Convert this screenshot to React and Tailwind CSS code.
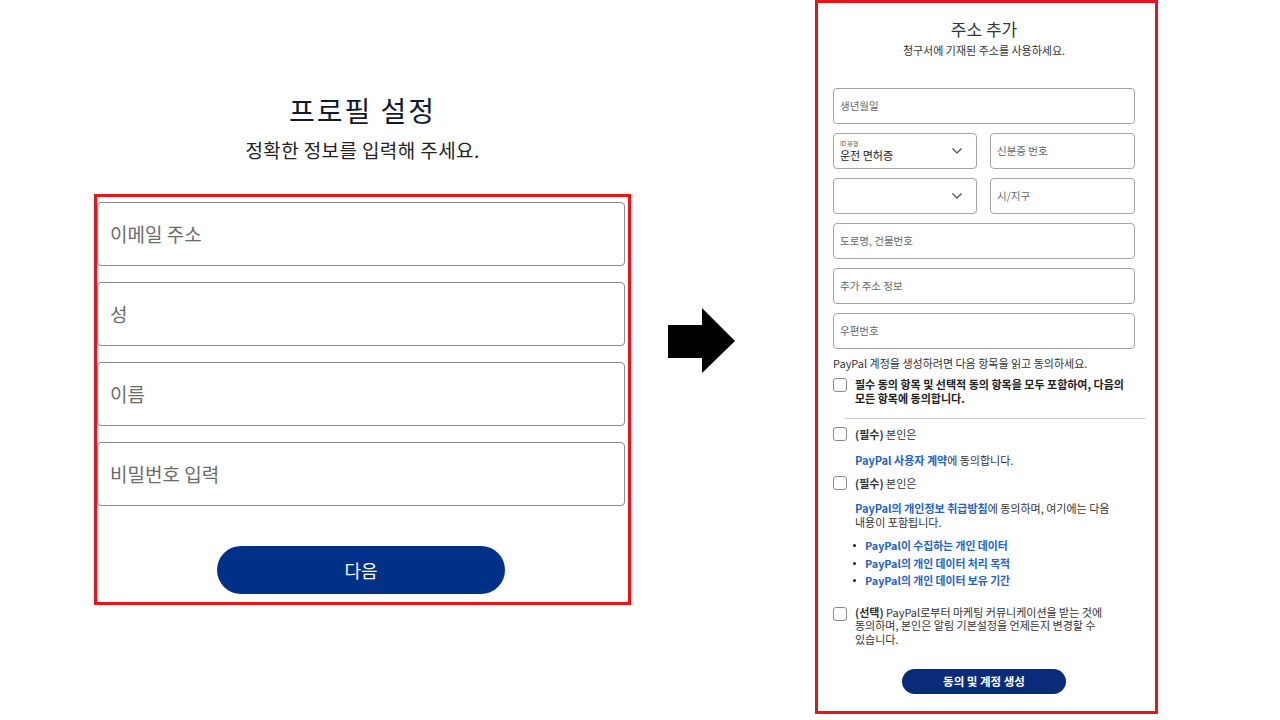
import React from "react";

const FONT = { fontFamily: '"Noto Sans CJK KR", "Noto Sans", sans-serif' };

function BigInput({ text }) {
  return (
    <div className="h-[64px] w-full rounded-[4px] border border-[#8c8c8c] flex items-center pl-[12px] text-[19px] text-[#6b6b6b]">
      {text}
    </div>
  );
}

function SmallInput({ text, className = "" }) {
  return (
    <div
      className={
        "h-[36px] rounded-[4px] border border-[#a3a3a3] flex items-center pl-[6px] text-[10.5px] text-[#666] " +
        className
      }
    >
      {text}
    </div>
  );
}

function Chevron() {
  return (
    <svg width="12" height="8" viewBox="0 0 12 8" className="mr-[13px]">
      <path d="M1.5 1.5 L6 6 L10.5 1.5" fill="none" stroke="#444" strokeWidth="1.2" />
    </svg>
  );
}

function Box() {
  return (
    <div className="w-[14px] h-[14px] shrink-0 rounded-[3px] border border-[#8a8a8a] bg-white" />
  );
}

function Link({ children }) {
  return <span className="font-bold text-[#1f63c6]">{children}</span>;
}

export default function App() {
  return (
    <div className="w-[1280px] h-[720px] bg-white flex items-start overflow-hidden" style={FONT}>
      {/* left: profile form */}
      <div className="ml-[94px] w-[537px] flex flex-col items-center">
        <div className="mt-[92px] text-[28px] leading-[36px] text-[#101a2c] tracking-[2px]">
          프로필 설정
        </div>
        <div className="mt-[10px] text-[19px] leading-[24px] text-[#222] tracking-[0.4px]">
          정확한 정보를 입력해 주세요.
        </div>
        <div className="mt-[32px] w-[537px] border-[3px] border-[#e8141c] pt-[5px] pr-[3px] pb-[8px] flex flex-col">
          <div className="flex flex-col gap-[16px]">
            <BigInput text="이메일 주소" />
            <BigInput text="성" />
            <BigInput text="이름" />
            <BigInput text="비밀번호 입력" />
          </div>
          <button className="mt-[40px] self-center w-[288px] h-[48px] rounded-full bg-[#003087] text-white text-[18px]">
            다음
          </button>
        </div>
      </div>

      {/* arrow */}
      <svg width="67" height="66" viewBox="0 0 67 66" className="ml-[37px] mt-[308px] shrink-0">
        <rect x="0" y="17" width="35" height="33" fill="#000" />
        <polygon points="34,0 67,33 34,65" fill="#000" />
      </svg>

      {/* right: address form */}
      <div className="ml-[80px] w-[343px] h-[714px] border-[3px] border-[#e8141c] flex flex-col pl-[15px]">
        <div className="w-[302px] flex flex-col items-center">
          <div className="mt-[16px] text-[17px] leading-[20px] text-[#2b3a40]">주소 추가</div>
          <div className="mt-[4px] text-[11px] leading-[14px] text-[#333]">
            청구서에 기재된 주소를 사용하세요.
          </div>
        </div>

        <div className="mt-[31px] w-[302px] flex flex-col gap-[9px]">
          <SmallInput text="생년월일" />
          <div className="flex gap-[13px]">
            <div className="h-[36px] w-[144px] rounded-[4px] border border-[#a3a3a3] flex items-center justify-between pl-[6px]">
              <div className="flex flex-col">
                <span className="text-[6px] leading-[8px] text-[#555]">ID 유형</span>
                <span className="text-[11px] leading-[15px] text-[#222]">운전 면허증</span>
              </div>
              <Chevron />
            </div>
            <SmallInput text="신분증 번호" className="w-[145px]" />
          </div>
          <div className="flex gap-[13px]">
            <div className="h-[36px] w-[144px] rounded-[4px] border border-[#a3a3a3] flex items-center justify-end">
              <Chevron />
            </div>
            <SmallInput text="시/지구" className="w-[145px]" />
          </div>
          <SmallInput text="도로명, 건물번호" />
          <SmallInput text="추가 주소 정보" />
          <SmallInput text="우편번호" />
        </div>

        <div className="mt-[7px] text-[11px] leading-[14px] text-[#333] whitespace-nowrap">
          PayPal 계정을 생성하려면 다음 항목을 읽고 동의하세요.
        </div>

        <div className="mt-[7px] flex gap-[8px]">
          <div className="mt-[1px]">
            <Box />
          </div>
          <div className="text-[11px] leading-[14px] font-bold text-[#222] whitespace-nowrap">
            필수 동의 항목 및 선택적 동의 항목을 모두 포함하여, 다음의
            <br />
            모든 항목에 동의합니다.
          </div>
        </div>

        <div className="mt-[13px] ml-[12px] w-[300px] h-px bg-[#c8c8c8]" />

        <div className="mt-[8px] flex gap-[8px] items-center">
          <Box />
          <div className="text-[11px] leading-[14px] text-[#333]">
            <span className="font-bold">(필수)</span> 본인은
          </div>
        </div>
        <div className="mt-[12px] ml-[22px] text-[11px] leading-[14px] text-[#333] whitespace-nowrap">
          <Link>PayPal 사용자 계약</Link>에 동의합니다.
        </div>

        <div className="mt-[9px] flex gap-[8px] items-center">
          <Box />
          <div className="text-[11px] leading-[14px] text-[#333]">
            <span className="font-bold">(필수)</span> 본인은
          </div>
        </div>
        <div className="mt-[11px] ml-[22px] text-[11px] leading-[14px] text-[#333] whitespace-nowrap">
          <Link>PayPal의 개인정보 취급방침</Link>에 동의하며, 여기에는 다음
          <br />
          내용이 포함됩니다.
        </div>

        <ul className="mt-[8px] ml-[20px] flex flex-col text-[10.8px] leading-[17.5px] whitespace-nowrap">
          {["PayPal이 수집하는 개인 데이터", "PayPal의 개인 데이터 처리 목적", "PayPal의 개인 데이터 보유 기간"].map(
            (t) => (
              <li key={t} className="flex items-center gap-[9px]">
                <span className="w-[3px] h-[3px] rounded-full bg-[#222]" />
                <Link>{t}</Link>
              </li>
            )
          )}
        </ul>

        <div className="mt-[16px] flex gap-[8px]">
          <div className="mt-[1px]">
            <Box />
          </div>
          <div className="text-[11px] leading-[13.5px] text-[#333] whitespace-nowrap">
            <span className="font-bold">(선택)</span> PayPal로부터 마케팅 커뮤니케이션을 받는 것에
            <br />
            동의하며, 본인은 알림 기본설정을 언제든지 변경할 수
            <br />
            있습니다.
          </div>
        </div>

        <div className="w-[302px] flex justify-center">
          <button className="mt-[23px] w-[164px] h-[25px] rounded-full bg-[#0a2a7a] text-white text-[11.5px] font-semibold">
            동의 및 계정 생성
          </button>
        </div>
      </div>
    </div>
  );
}
